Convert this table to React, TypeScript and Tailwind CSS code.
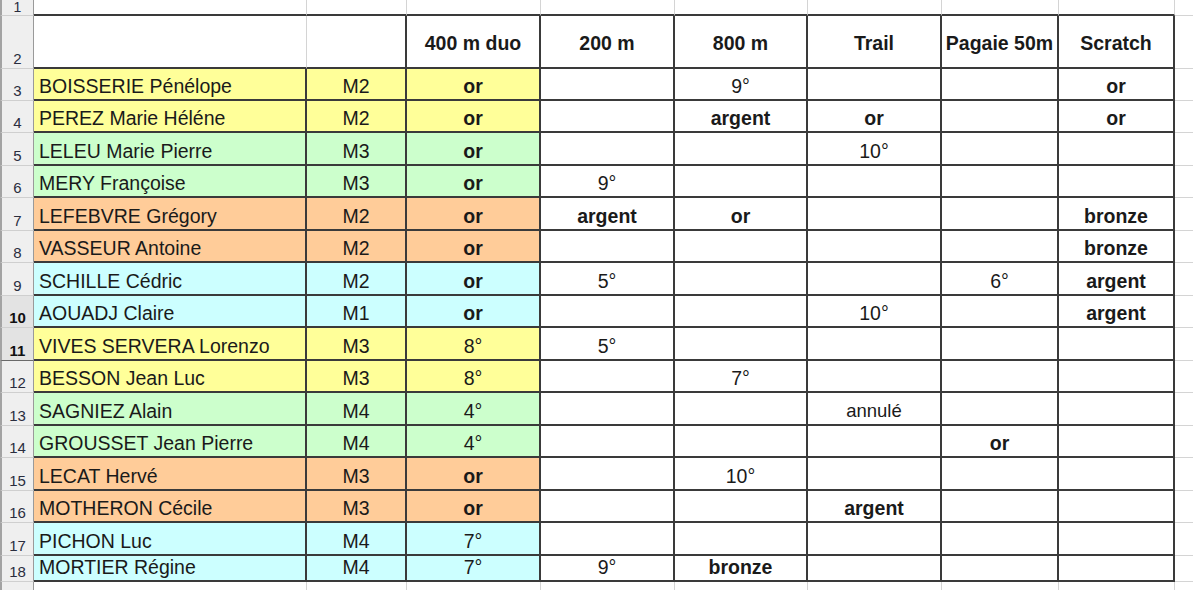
import React from "react";

type Row = {
  n: number;
  h: string;
  bg: string;
  name: string;
  cat: string;
  v: string[];
  sel?: boolean;
};

const Y = "bg-[#ffff99]";
const G = "bg-[#ccffcc]";
const O = "bg-[#ffcc99]";
const C = "bg-[#ccffff]";

const rows: Row[] = [
  { n: 3, h: "h-[32px]", bg: Y, name: "BOISSERIE Pénélope", cat: "M2", v: ["or", "", "9°", "", "", "or"] },
  { n: 4, h: "h-[32px]", bg: Y, name: "PEREZ Marie Héléne", cat: "M2", v: ["or", "", "argent", "or", "", "or"] },
  { n: 5, h: "h-[33px]", bg: G, name: "LELEU Marie Pierre", cat: "M3", v: ["or", "", "", "10°", "", ""] },
  { n: 6, h: "h-[32px]", bg: G, name: "MERY Françoise", cat: "M3", v: ["or", "9°", "", "", "", ""] },
  { n: 7, h: "h-[33px]", bg: O, name: "LEFEBVRE Grégory", cat: "M2", v: ["or", "argent", "or", "", "", "bronze"] },
  { n: 8, h: "h-[32px]", bg: O, name: "VASSEUR Antoine", cat: "M2", v: ["or", "", "", "", "", "bronze"] },
  { n: 9, h: "h-[33px]", bg: C, name: "SCHILLE Cédric", cat: "M2", v: ["or", "5°", "", "", "6°", "argent"] },
  { n: 10, h: "h-[32px]", bg: C, name: "AOUADJ Claire", cat: "M1", v: ["or", "", "", "10°", "", "argent"], sel: true },
  { n: 11, h: "h-[33px]", bg: Y, name: "VIVES SERVERA Lorenzo", cat: "M3", v: ["8°", "5°", "", "", "", ""], sel: true },
  { n: 12, h: "h-[32px]", bg: Y, name: "BESSON Jean Luc", cat: "M3", v: ["8°", "", "7°", "", "", ""] },
  { n: 13, h: "h-[33px]", bg: G, name: "SAGNIEZ Alain", cat: "M4", v: ["4°", "", "", "annulé", "", ""] },
  { n: 14, h: "h-[32px]", bg: G, name: "GROUSSET Jean Pierre", cat: "M4", v: ["4°", "", "", "", "or", ""] },
  { n: 15, h: "h-[33px]", bg: O, name: "LECAT Hervé", cat: "M3", v: ["or", "", "10°", "", "", ""] },
  { n: 16, h: "h-[32px]", bg: O, name: "MOTHERON Cécile", cat: "M3", v: ["or", "", "", "argent", "", ""] },
  { n: 17, h: "h-[33px]", bg: C, name: "PICHON Luc", cat: "M4", v: ["7°", "", "", "", "", ""] },
  { n: 18, h: "h-[26px]", bg: C, name: "MORTIER Régine", cat: "M4", v: ["7°", "9°", "bronze", "", "", ""] },
];

const colW = ["w-[134px]", "w-[134px]", "w-[133px]", "w-[134px]", "w-[117px]", "w-[116px]"];
const headers = ["400 m duo", "200 m", "800 m", "Trail", "Pagaie 50m", "Scratch"];
const boldWords = ["or", "argent", "bronze"];

const DARK = "border-[#3a3a3a]";

function RowHead({ n, sel, bottomDark }: { n: number; sel?: boolean; bottomDark?: boolean }) {
  return (
    <div
      className={`w-[34px] shrink-0 flex items-end justify-center border-l-2 border-l-[#a3a3a3] border-r border-r-[#9a9a9a] border-b ${
        bottomDark ? "border-b-[#6a6a6a]" : "border-b-[#cfcfcf]"
      } ${sel ? "bg-[#e3e3e3] font-bold text-[#111]" : "bg-[#efefef] text-[#2a2d3e]"} text-[15px] leading-[17px] pb-[1px]`}
    >
      {n}
    </div>
  );
}

export default function App() {
  return (
    <div className="w-[1193px] h-[590px] overflow-hidden bg-white font-['Liberation_Sans',Arial,sans-serif] text-[#1a1a1a] text-[19.5px]">
      {/* Row 1 */}
      <div className="flex h-[16px]">
        <div className="w-[34px] shrink-0 flex items-center justify-center border-l-2 border-l-[#a3a3a3] border-r border-r-[#9a9a9a] border-b border-b-[#cfcfcf] bg-[#efefef] text-[#2a2d3e] text-[14px] leading-[15px]">
          1
        </div>
        <div className={`w-[273px] shrink-0 border-r border-r-[#d4d4d4] border-b-2 ${DARK}`} />
        <div className={`w-[100px] shrink-0 border-r border-r-[#d4d4d4] border-b-2 ${DARK}`} />
        {colW.map((w, i) => (
          <div key={i} className={`${w} shrink-0 border-r border-r-[#d4d4d4] border-b-2 ${DARK}`} />
        ))}
        <div className="flex-1 border-b border-b-[#d4d4d4]" />
      </div>

      {/* Row 2 header */}
      <div className="flex h-[53px]">
        <RowHead n={2} />
        <div className={`w-[273px] shrink-0 border-r border-r-[#d4d4d4] border-b-2 ${DARK}`} />
        <div className={`w-[100px] shrink-0 border-r-2 border-b-2 ${DARK}`} />
        {colW.map((w, i) => (
          <div
            key={i}
            className={`${w} shrink-0 flex items-center justify-center font-bold whitespace-nowrap border-r-2 border-b-2 ${DARK} pt-[4px]`}
          >
            {headers[i]}
          </div>
        ))}
        <div className="flex-1 border-b border-b-[#d4d4d4]" />
      </div>

      {/* Data rows */}
      {rows.map((r) => (
        <div key={r.n} className={`flex ${r.h}`}>
          <RowHead n={r.n} sel={r.sel} bottomDark={r.n === 11} />
          <div
            className={`w-[273px] shrink-0 ${r.bg} flex items-end pl-[5px] pb-[2px] leading-[22px] whitespace-nowrap border-r-2 border-b-2 ${DARK}`}
          >
            {r.name}
          </div>
          <div
            className={`w-[100px] shrink-0 ${r.bg} flex items-end justify-center pb-[2px] leading-[22px] border-r-2 border-b-2 ${DARK}`}
          >
            {r.cat}
          </div>
          {r.v.map((val, i) => (
            <div
              key={i}
              className={`${colW[i]} shrink-0 ${i === 0 ? r.bg : "bg-white"} flex items-end justify-center pb-[2px] leading-[22px] whitespace-nowrap border-r-2 border-b-2 ${DARK} ${
                boldWords.includes(val) ? "font-bold" : ""
              } ${val === "annulé" ? "text-[18.5px]" : ""}`}
            >
              {val}
            </div>
          ))}
          <div className="flex-1 border-b border-b-[#d4d4d4]" />
        </div>
      ))}

      {/* Row 19 partial */}
      <div className="flex h-[30px]">
        <div className="w-[34px] shrink-0 border-l-2 border-l-[#a3a3a3] border-r border-r-[#9a9a9a] bg-[#efefef]" />
        <div className="w-[273px] shrink-0 border-r border-r-[#d4d4d4]" />
        <div className="w-[100px] shrink-0 border-r border-r-[#d4d4d4]" />
        {colW.map((w, i) => (
          <div key={i} className={`${w} shrink-0 border-r border-r-[#d4d4d4]`} />
        ))}
        <div className="flex-1" />
      </div>
    </div>
  );
}
